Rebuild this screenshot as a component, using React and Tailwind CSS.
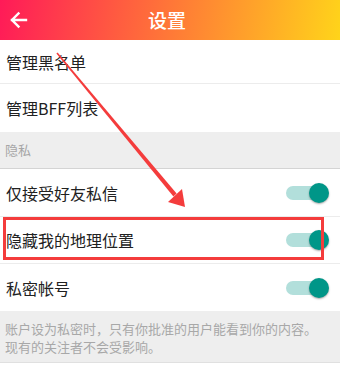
import React from "react";

function Toggle() {
  return (
    <div className="relative w-[46px] h-[22px] flex items-center">
      <div className="w-[34px] h-[14px] rounded-full bg-[#b2dfdb]" />
      <div className="absolute right-[3px] top-[1px] w-[20px] h-[20px] rounded-full bg-[#009688] shadow-[0_1px_2px_rgba(0,0,0,0.35)]" />
    </div>
  );
}

function Row({ label, h, toggle, border = true }) {
  return (
    <div
      className={`flex items-center justify-between pl-[6px] pr-[8px] bg-white ${h} ${
        border ? "border-b border-[#ececec]" : ""
      }`}
    >
      <span className="text-[16px] text-[#212121]">{label}</span>
      {toggle && <Toggle />}
    </div>
  );
}

export default function App() {
  return (
    <div
      className="relative w-[340px] h-[376px] bg-white overflow-hidden"
      style={{ fontFamily: '"Noto Sans CJK SC", "Noto Sans", sans-serif' }}
    >
      <div className="h-[40px] flex items-center relative bg-[linear-gradient(100deg,#ff1a58_0%,#ff5c40_35%,#ff9c2c_70%,#ffd41a_100%)]">
        <svg className="absolute left-[9px] top-[11px]" width="19" height="18" viewBox="0 0 19 18">
          <path d="M17 9H3M9.5 2.5L3 9l6.5 6.5" stroke="white" strokeWidth="2.4" fill="none" strokeLinecap="square" />
        </svg>
        <div className="flex-1 text-center text-white text-[19px] font-medium pr-[6px]">设置</div>
      </div>

      <Row label="管理黑名单" h="h-[44px]" />
      <Row label="管理BFF列表" h="h-[48px]" border={false} />

      <div className="h-[37px] bg-[#eeeeee] border-b border-[#d4d4d4] flex items-center pl-[5px]">
        <span className="text-[13px] text-[#a6a6a6]">隐私</span>
      </div>

      <Row label="仅接受好友私信" h="h-[48px]" toggle />
      <Row label="隐藏我的地理位置" h="h-[47px]" toggle />
      <Row label="私密帐号" h="h-[47px]" toggle border={false} />

      <div className="h-[52px] bg-[#eeeeee] border-b border-[#e0e0e0] pl-[5px] pt-[9px] text-[13px] leading-[18px] text-[#a8a8a8]">
        <div>账户设为私密时，只有你批准的用户能看到你的内容。</div>
        <div>现有的关注者不会受影响。</div>
      </div>

      <div className="absolute left-[3px] top-[217px] w-[321px] h-[43px] border-[3px] border-[#f43c3c]" />

      <svg className="absolute left-0 top-0" width="340" height="376" viewBox="0 0 340 376">
        <polygon points="57.6,52.4 56.4,53.6 173.4,196.6 176.6,193.4" fill="#f43c3c" />
        <polygon points="185,207 168,202 182,189" fill="#f43c3c" />
      </svg>
    </div>
  );
}
